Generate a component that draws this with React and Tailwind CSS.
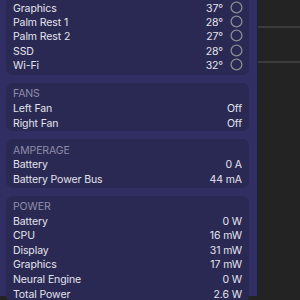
import React from "react";

const Ring = () => (
  <svg width="13" height="13" viewBox="0 0 13 13" className="shrink-0">
    <circle cx="6.5" cy="6.5" r="5.4" fill="none" stroke="#8b8b93" strokeWidth="1.3" />
  </svg>
);

const Row = ({ label, value, ring, h = "h-[14.6px]" }) => (
  <div className={"flex items-center pt-[3px] " + h}>
    <span className="flex-1">{label}</span>
    <span>{value}</span>
    {ring && <span className="ml-[7px] flex -mt-[3px]"><Ring /></span>}
  </div>
);

const Card = ({ title, children, className = "" }) => (
  <div className={"rounded-[7px] bg-[#2a2954] px-[7px] " + className}>
    {title && (
      <div className="h-[14.6px] pt-[3px] flex items-center text-[#8e8ca8]">{title}</div>
    )}
    {children}
  </div>
);

export default function App() {
  return (
    <div
      className="w-[300px] h-[300px] overflow-hidden flex bg-[#232323] text-[10.5px] tracking-[-0.1px] text-[#e4e3ec]"
      style={{ fontFamily: "Inter, 'Noto Sans', sans-serif" }}
    >
      <div className="w-[258px] h-full bg-[#302e62] pl-[6px] pr-[8px] flex flex-col gap-[8px] -mt-[4px] border-r border-[#1e1d3a]">
        <Card className="pt-[4px] pb-[3.5px] pr-[6px]">
          <Row h="h-[14.3px]" label="Graphics" value="37°" ring />
          <Row h="h-[14.3px]" label="Palm Rest 1" value="28°" ring />
          <Row h="h-[14.3px]" label="Palm Rest 2" value="27°" ring />
          <Row h="h-[14.3px]" label="SSD" value="28°" ring />
          <Row h="h-[14.3px]" label="Wi-Fi" value="32°" ring />
        </Card>
        <Card title="FANS" className="pt-[2.5px] pb-[2px]">
          <Row label="Left Fan" value="Off" />
          <Row label="Right Fan" value="Off" />
        </Card>
        <Card title="AMPERAGE" className="pt-[2.5px] pb-[2px]">
          <Row label="Battery" value="0 A" />
          <Row label="Battery Power Bus" value="44 mA" />
        </Card>
        <Card title="POWER" className="pt-[2.5px] pb-[2px]">
          <Row label="Battery" value="0 W" />
          <Row label="CPU" value="16 mW" />
          <Row label="Display" value="31 mW" />
          <Row label="Graphics" value="17 mW" />
          <Row label="Neural Engine" value="0 W" />
          <Row label="Total Power" value="2.6 W" />
        </Card>
      </div>
      <div className="flex-1 flex flex-col">
        <div className="h-[26px]" />
        <div className="h-[2px] bg-[#3b3b3b]" />
        <div className="h-[33px]" />
        <div className="h-[2px] bg-[#3b3b3b]" />
      </div>
    </div>
  );
}
